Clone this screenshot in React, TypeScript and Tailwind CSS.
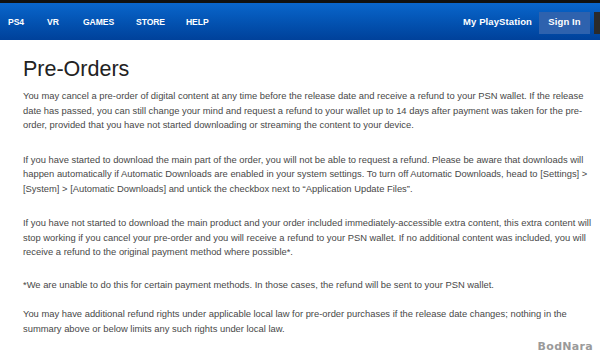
export default function App() {
  const navItem = "text-white font-bold text-[9.5px] tracking-[0.1px]";
  const leftItem = "text-white font-bold text-[8.6px] tracking-[-0.1px]";
  return (
    <div className="w-[600px] h-[359px] overflow-hidden bg-white" style={{ fontFamily: '"Liberation Sans", Arial, sans-serif' }}>
      <div className="h-[3px] bg-[#111]" />
      <div className="h-[37px] pt-[2px] flex items-center bg-gradient-to-b from-[#0a66cc] to-[#00419a]">
        <div className="flex items-center pl-[8px]">
          <span className={`${leftItem} w-[39px]`}>PS4</span>
          <span className={`${leftItem} w-[36px]`}>VR</span>
          <span className={`${leftItem} w-[53px]`}>GAMES</span>
          <span className={`${leftItem} w-[50px]`}>STORE</span>
          <span className={leftItem}>HELP</span>
        </div>
        <div className="ml-auto flex items-center">
          <span className={navItem}>My PlayStation</span>
          <div className="ml-[7px] w-[51px] h-[22px] flex items-center justify-center bg-[#2e62ae]">
            <span className={navItem}>Sign In</span>
          </div>
          <div className="ml-[4px] w-[6px] h-[22px] bg-[#2b2b2b]" />
        </div>
      </div>
      <div className="pl-[23px] pr-[4px] text-[#484848] text-[9.4px] leading-[14.5px]">
        <h1 className="text-[21.5px] leading-[24px] text-[#222] mt-[17px] mb-[8px] font-normal">Pre-Orders</h1>
        <p className="mb-[20px]">
          You may cancel a pre-order of digital content at any time before the release date and receive a refund to your PSN wallet. If the release date has passed, you can still change your mind and request a refund to your wallet up to 14 days after payment was taken for the pre-order, provided that you have not started downloading or streaming the content to your device.
        </p>
        <p className="mb-[20px]">
          If you have started to download the main part of the order, you will not be able to request a refund. Please be aware that downloads will happen automatically if Automatic Downloads are enabled in your system settings. To turn off Automatic Downloads, head to [Settings] &gt; [System] &gt; [Automatic Downloads] and untick the checkbox next to “Application Update Files”.
        </p>
        <p className="mb-[18px]">
          If you have not started to download the main product and your order included immediately-accessible extra content, this extra content will stop working if you cancel your pre-order and you will receive a refund to your PSN wallet. If no additional content was included, you will receive a refund to the original payment method where possible*.
        </p>
        <p className="mb-[15px]">
          *We are unable to do this for certain payment methods. In those cases, the refund will be sent to your PSN wallet.
        </p>
        <p>
          You may have additional refund rights under applicable local law for pre-order purchases if the release date changes; nothing in the summary above or below limits any such rights under local law.
        </p>
      </div>
      <div className="flex justify-end pr-[7px] mt-[3px]">
        <span className="text-[#9a9a9a] font-bold text-[11px] tracking-[0.3px]" style={{ fontFamily: '"DejaVu Sans", sans-serif' }}>BodNara</span>
      </div>
    </div>
  );
}
